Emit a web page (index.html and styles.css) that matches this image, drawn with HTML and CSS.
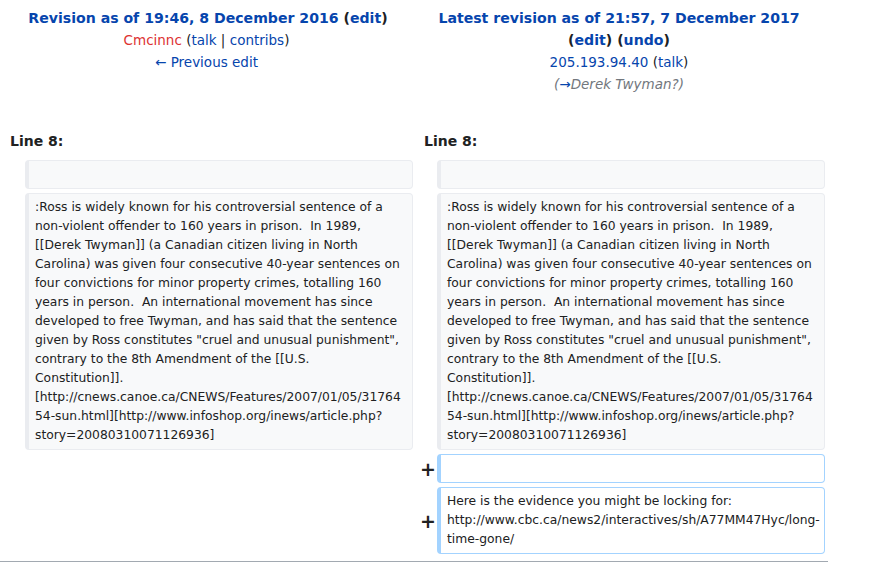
FILE: index.html
```html
<!DOCTYPE html>
<html lang="en">
<head>
<meta charset="utf-8">
<title>Diff</title>
<link rel="stylesheet" href="styles.css">
</head>
<body>
<div class="diff">
  <div class="hdr hdr-old">
    <div class="hdr-title"><a href="#">Revision as of 19:46, 8 December 2016</a> <span class="paren">(<a href="#">edit</a>)</span></div>
    <div><a href="#" class="new">Cmcinnc</a> <span class="tools">(<a href="#">talk</a> | <a href="#">contribs</a>)</span></div>
    <div><a href="#">← Previous edit</a></div>
  </div>
  <div class="hdr hdr-new">
    <div class="hdr-title"><a href="#">Latest revision as of 21:57, 7 December 2017</a><br><span class="paren">(<a href="#">edit</a>)</span> <span class="paren">(<a href="#">undo</a>)</span></div>
    <div><a href="#">205.193.94.40</a> <span class="tools">(<a href="#">talk</a>)</span></div>
    <div class="comment">(<a href="#" class="arrow">→</a>Derek Twyman?)</div>
  </div>

  <div class="lineno lineno-old">Line 8:</div>
  <div class="lineno lineno-new">Line 8:</div>

  <div class="marker"></div>
  <div class="cell context"><br></div>
  <div class="marker"></div>
  <div class="cell context"><br></div>

  <div class="marker"></div>
  <div class="cell context">:Ross is widely known for his controversial sentence of a
non-violent offender to 160 years in prison.  In 1989,
[[Derek Twyman]] (a Canadian citizen living in North
Carolina) was given four consecutive 40-year sentences on
four convictions for minor property crimes, totalling 160
years in person.  An international movement has since
developed to free Twyman, and has said that the sentence
given by Ross constitutes "cruel and unusual punishment",
contrary to the 8th Amendment of the [[U.S.
Constitution]].
[http://cnews.canoe.ca/CNEWS/Features/2007/01/05/31764
54-sun.html][http://www.infoshop.org/inews/article.php?
story=20080310071126936]</div>
  <div class="marker"></div>
  <div class="cell context">:Ross is widely known for his controversial sentence of a
non-violent offender to 160 years in prison.  In 1989,
[[Derek Twyman]] (a Canadian citizen living in North
Carolina) was given four consecutive 40-year sentences on
four convictions for minor property crimes, totalling 160
years in person.  An international movement has since
developed to free Twyman, and has said that the sentence
given by Ross constitutes "cruel and unusual punishment",
contrary to the 8th Amendment of the [[U.S.
Constitution]].
[http://cnews.canoe.ca/CNEWS/Features/2007/01/05/31764
54-sun.html][http://www.infoshop.org/inews/article.php?
story=20080310071126936]</div>

  <div class="empty"></div>
  <div class="marker">+</div>
  <div class="cell added"><br></div>

  <div class="empty"></div>
  <div class="marker">+</div>
  <div class="cell added">Here is the evidence you might be locking for:
http://www.cbc.ca/news2/interactives/sh/A77MM47Hyc/long-
time-gone/</div>
</div>
<hr class="rule">
</body>
</html>
```
FILE: styles.css
```css
html, body {
  margin: 0;
  padding: 0;
  background: #fff;
}
body {
  font-family: "DejaVu Sans", sans-serif;
  font-size: 14px;
  color: #202122;
}
a {
  color: #0645ad;
  text-decoration: none;
}
a.new {
  color: #d33;
}
.diff {
  display: grid;
  grid-template-columns: 25px 388px 24px 388px;
  row-gap: 4px;
  width: 828px;
}
.hdr {
  grid-column: span 2;
  text-align: center;
  font-size: 13.5px;
  line-height: 22px;
  padding-top: 7px;
}
.hdr-title {
  font-weight: bold;
  font-size: 14.1px;
}
.hdr-old .hdr-title {
  padding-left: 3px;
}
.paren, .tools {
  color: #202122;
}
.comment {
  font-style: italic;
  color: #72777d;
}
.comment .arrow {
  font-style: normal;
  color: #0645ad;
}
.lineno {
  grid-column: span 2;
  font-weight: bold;
  line-height: 22px;
  padding-left: 10px;
  margin-top: 31px;
  margin-bottom: 4px;
}
.lineno-new {
  padding-left: 11px;
}
.marker {
  font-weight: bold;
  font-size: 19px;
  padding-right: 1px;
  display: flex;
  align-items: center;
  justify-content: flex-end;
}
.empty {
  grid-column: span 2;
}
.cell {
  font-size: 12.32px;
  line-height: 19px;
  padding: 4px 6px;
  border: 1px solid #eaecf0;
  border-left-width: 4px;
  border-radius: 4px;
  white-space: pre;
}
.context {
  background: #f8f9fa;
  color: #202122;
}
.added {
  background: #fff;
  border-color: #a3d3ff;
}
.added:first-of-type {
  margin-top: 1px;
}
.rule {
  width: 828px;
  margin: 7px 0 0 0;
  border: 0;
  height: 1px;
  background: #a2a9b1;
}
```
